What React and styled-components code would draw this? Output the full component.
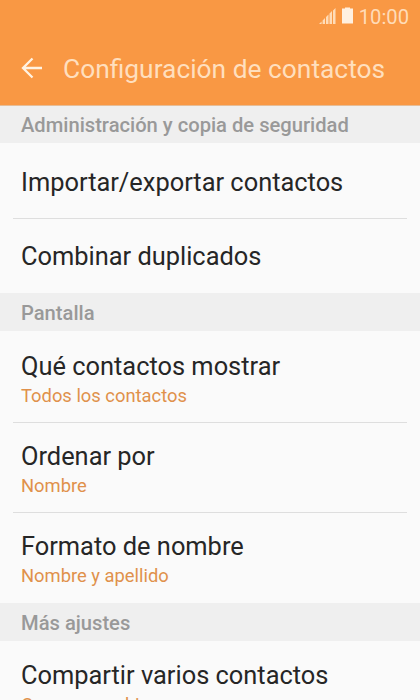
import React from 'react'
import styled, { createGlobalStyle } from 'styled-components'

const GlobalStyle = createGlobalStyle`
  * {
    box-sizing: border-box;
  }

  body {
    margin: 0;
    font-family: Roboto, sans-serif;
    background: #fafafa;
    overflow: hidden;
  }
`

const Screen = styled.div`
  width: 420px;
  height: 700px;
  overflow: hidden;
  background: #fafafa;
`

const Header = styled.header`
  height: 105px;
  background: #f99844;
`

const StatusBar = styled.div`
  height: 33px;
  padding-right: 11px;
  display: flex;
  align-items: center;
  justify-content: flex-end;
  color: #ffdcb8;
`

const Battery = styled.svg`
  margin: 0 6px 2px 6px;
`

const Signal = styled.svg`
  margin-bottom: 1px;
`

const Clock = styled.span`
  font-size: 20.2px;
  line-height: 34px;
`

const TitleBar = styled.div`
  height: 72px;
  padding-left: 21px;
  display: flex;
  align-items: center;
`

const BackButton = styled.button`
  width: 22px;
  height: 22px;
  margin: 0 20px 2px 0;
  padding: 0;
  border: none;
  background: none;
  display: flex;
`

const Title = styled.h1`
  margin: 0;
  color: #ffdfbe;
  font-size: 26.35px;
  font-weight: 400;
  white-space: nowrap;
`

const SectionHeader = styled.h2`
  height: 38px;
  margin: 0;
  padding-left: 21px;
  background: #efefef;
  color: #999;
  font-size: 20.17px;
  font-weight: 500;
  line-height: 40px;
  box-shadow: ${({ $first }) => ($first ? 'inset 0 1px 0 #e6bd97' : 'none')};
`

const List = styled.ul`
  margin: 0;
  padding: 0 13px;
  list-style: none;
`

const Item = styled.li`
  height: ${({ $tall }) => ($tall ? '90.5px' : '75px')};
  padding: ${({ $tall }) => ($tall ? '18px' : '22px')} 8px 0;
  border-top: 1px solid #dedede;

  &:first-child {
    padding-top: ${({ $tall }) => ($tall ? '18.5px' : '23px')};
    border-top-color: transparent;
  }
`

const ItemTitle = styled.div`
  color: #262626;
  font-size: 25.4px;
  line-height: 30px;
  white-space: nowrap;
`

const ItemValue = styled.div`
  margin-top: 1px;
  color: #e0914b;
  font-size: 18.38px;
  line-height: 28px;
  white-space: nowrap;
`

const sections = [
  {
    title: 'Administración y copia de seguridad',
    items: [{ title: 'Importar/exportar contactos' }, { title: 'Combinar duplicados' }]
  },
  {
    title: 'Pantalla',
    items: [
      { title: 'Qué contactos mostrar', value: 'Todos los contactos' },
      { title: 'Ordenar por', value: 'Nombre' },
      { title: 'Formato de nombre', value: 'Nombre y apellido' }
    ]
  },
  {
    title: 'Más ajustes',
    items: [{ title: 'Compartir varios contactos', value: 'Como un archivo' }]
  }
]

function SignalIcon() {
  return (
    <Signal width="17" height="17" viewBox="0 0 17 17" fill="currentColor">
      <path d="M0 16L2.6 13.4V16zM3.6 12.4L6 10V16H3.6zM7 9L9.5 6.5V16H7zM10.5 5.5L13 3V16H10.5zM14 2.5L16.5 0V16H14z" />
    </Signal>
  )
}

function BatteryIcon() {
  return (
    <Battery width="11" height="17" viewBox="0 0 11 17">
      <path d="M3 0.5h5v1h3V16.5H0V1.5h3z" fill="#fff0e0" />
    </Battery>
  )
}

function App() {
  return (
    <Screen>
      <GlobalStyle />
      <Header>
        <StatusBar>
          <SignalIcon />
          <BatteryIcon />
          <Clock>10:00</Clock>
        </StatusBar>
        <TitleBar>
          <BackButton aria-label="Atrás">
            <svg width="22" height="22" viewBox="0 0 22 22" fill="none" stroke="#fff2e2" strokeWidth="2.3">
              <path d="M21 11H2M11.5 1.5L2 11L11.5 20.5" />
            </svg>
          </BackButton>
          <Title>Configuración de contactos</Title>
        </TitleBar>
      </Header>
      {sections.map((section, index) => (
        <section key={section.title}>
          <SectionHeader $first={index === 0}>{section.title}</SectionHeader>
          <List>
            {section.items.map(item => (
              <Item key={item.title} $tall={Boolean(item.value)}>
                <ItemTitle>{item.title}</ItemTitle>
                {item.value && <ItemValue>{item.value}</ItemValue>}
              </Item>
            ))}
          </List>
        </section>
      ))}
    </Screen>
  )
}

export default App
